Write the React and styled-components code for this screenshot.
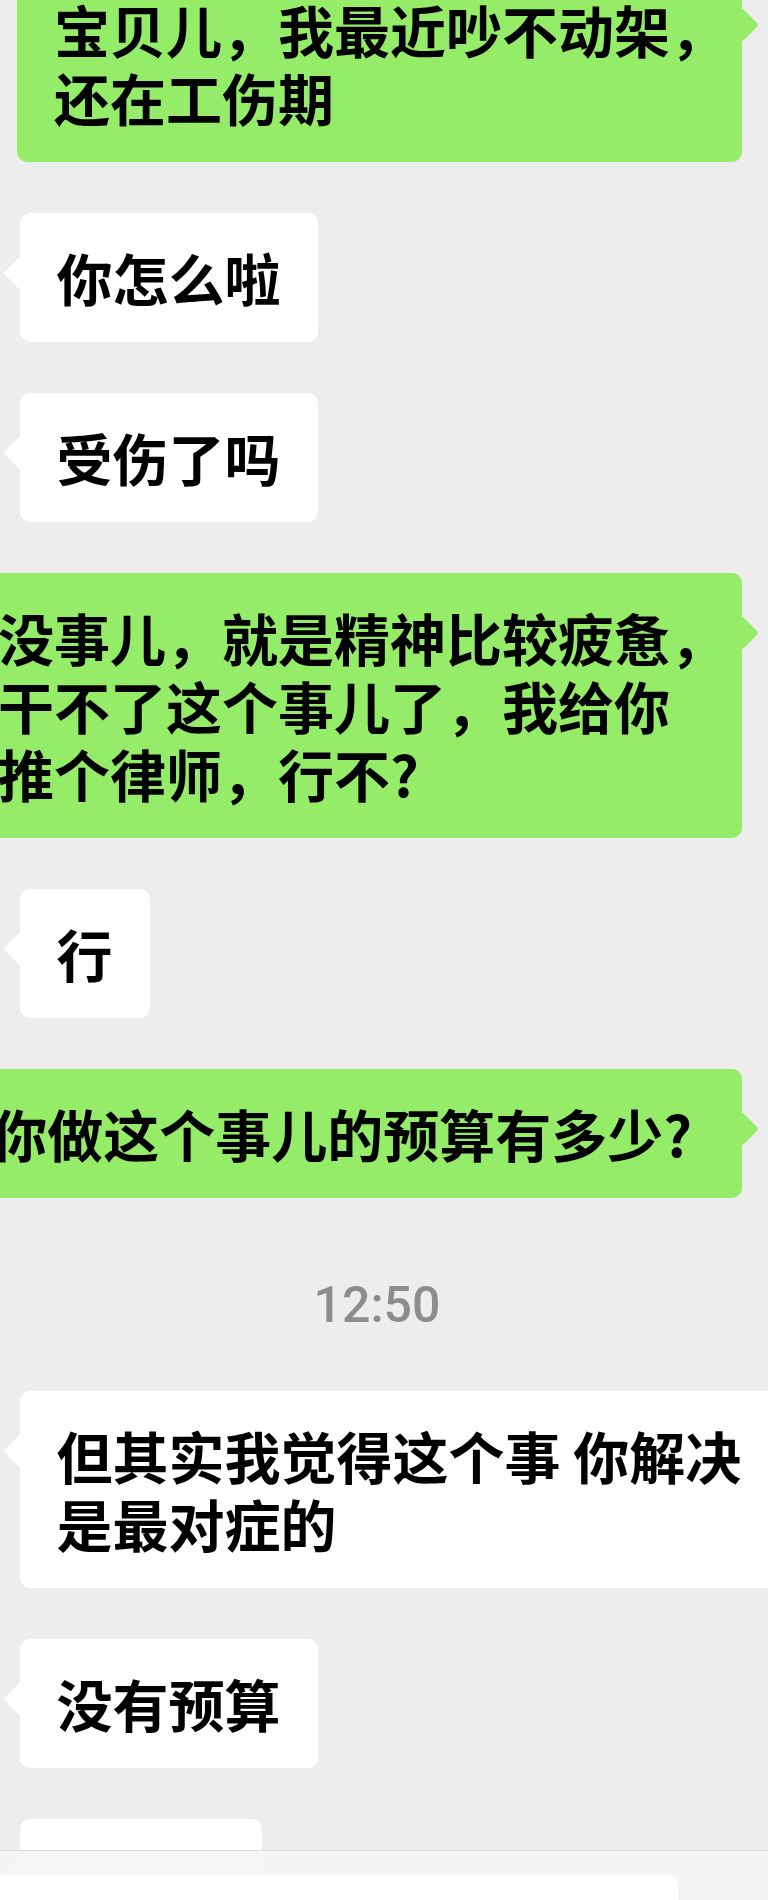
import React from 'react'
import styled, { createGlobalStyle } from 'styled-components'

const GlobalStyle = createGlobalStyle`
  html, body {
    margin: 0;
    padding: 0;
    overflow: hidden;
    background: #ededed;
  }
`

const Screen = styled.div`
  position: relative;
  width: 768px;
  height: 1900px;
  overflow: hidden;
  background: #ededed;
  font-family: "Noto Sans CJK SC", "Noto Sans", sans-serif;
`

const Messages = styled.div`
  display: flex;
  flex-direction: column;
  gap: 51px;
  margin-top: -35.5px;
`

const Row = styled.div`
  display: flex;
  justify-content: ${p => (p.$mine ? 'flex-end' : 'flex-start')};
  padding: ${p => (p.$mine ? '0 26px 0 0' : '0 0 0 19.5px')};
`

const Bubble = styled.div`
  position: relative;
  flex-shrink: 0;
  white-space: nowrap;
  background: ${p => (p.$mine ? '#95ec69' : '#ffffff')};
  border-radius: 10px;
  padding: ${p => (p.$mine ? `30.5px ${p.$padRight || 16}px 30.5px 37px` : '30.5px 37px')};
  color: #000;
  font-size: 56px;
  font-weight: 700;
  line-height: 68px;

  &::before {
    content: '';
    position: absolute;
    top: 48px;
    ${p => (p.$mine ? 'right: -12px;' : 'left: -12px;')}
    width: 24px;
    height: 24px;
    border-radius: 3px;
    background: inherit;
    transform: rotate(45deg);
  }
`

const Line = styled.div`
  display: block;
`

const Timestamp = styled.div`
  box-sizing: border-box;
  height: 91px;
  padding: 22px 14px 0 0;
  text-align: center;
  line-height: 69px;
  font-family: Roboto, "Liberation Sans", sans-serif;
  font-size: 50px;
  font-weight: 500;
  color: #8d8d8d;
`

const BottomBar = styled.div`
  position: absolute;
  left: 0;
  right: 0;
  bottom: 0;
  height: 49px;
  border-top: 1px solid #d9d9d9;
  background: rgba(245, 245, 245, 0.94);
`

const InputBox = styled.div`
  position: absolute;
  left: -20px;
  top: 24px;
  width: 698px;
  height: 60px;
  background: #ffffff;
  border-radius: 9px;
`

const messages = [
  { mine: true, lines: ['宝贝儿，我最近吵不动架，', '还在工伤期'] },
  { mine: false, lines: ['你怎么啦'] },
  { mine: false, lines: ['受伤了吗'] },
  { mine: true, lines: ['没事儿，就是精神比较疲惫，', '干不了这个事儿了，我给你', '推个律师，行不?'] },
  { mine: false, lines: ['行'] },
  { mine: true, pad: 50, lines: ['你做这个事儿的预算有多少?'] },
  { time: '12:50' },
  { mine: false, lines: ['但其实我觉得这个事 你解决', '是最对症的'] },
  { mine: false, lines: ['没有预算'] },
  { mine: false, lines: ['\u3000\u3000\u3000'] },
]

const App = () => {
  return (
    <>
      <GlobalStyle />
      <Screen>
        <Messages>
          {messages.map((m, i) =>
            m.time ? (
              <Timestamp key={i}>{m.time}</Timestamp>
            ) : (
              <Row key={i} $mine={m.mine}>
                <Bubble $mine={m.mine} $padRight={m.pad}>
                  {m.lines.map((l, j) => (
                    <Line key={j}>{l}</Line>
                  ))}
                </Bubble>
              </Row>
            )
          )}
        </Messages>
        <BottomBar>
          <InputBox />
        </BottomBar>
      </Screen>
    </>
  )
}

export default App
